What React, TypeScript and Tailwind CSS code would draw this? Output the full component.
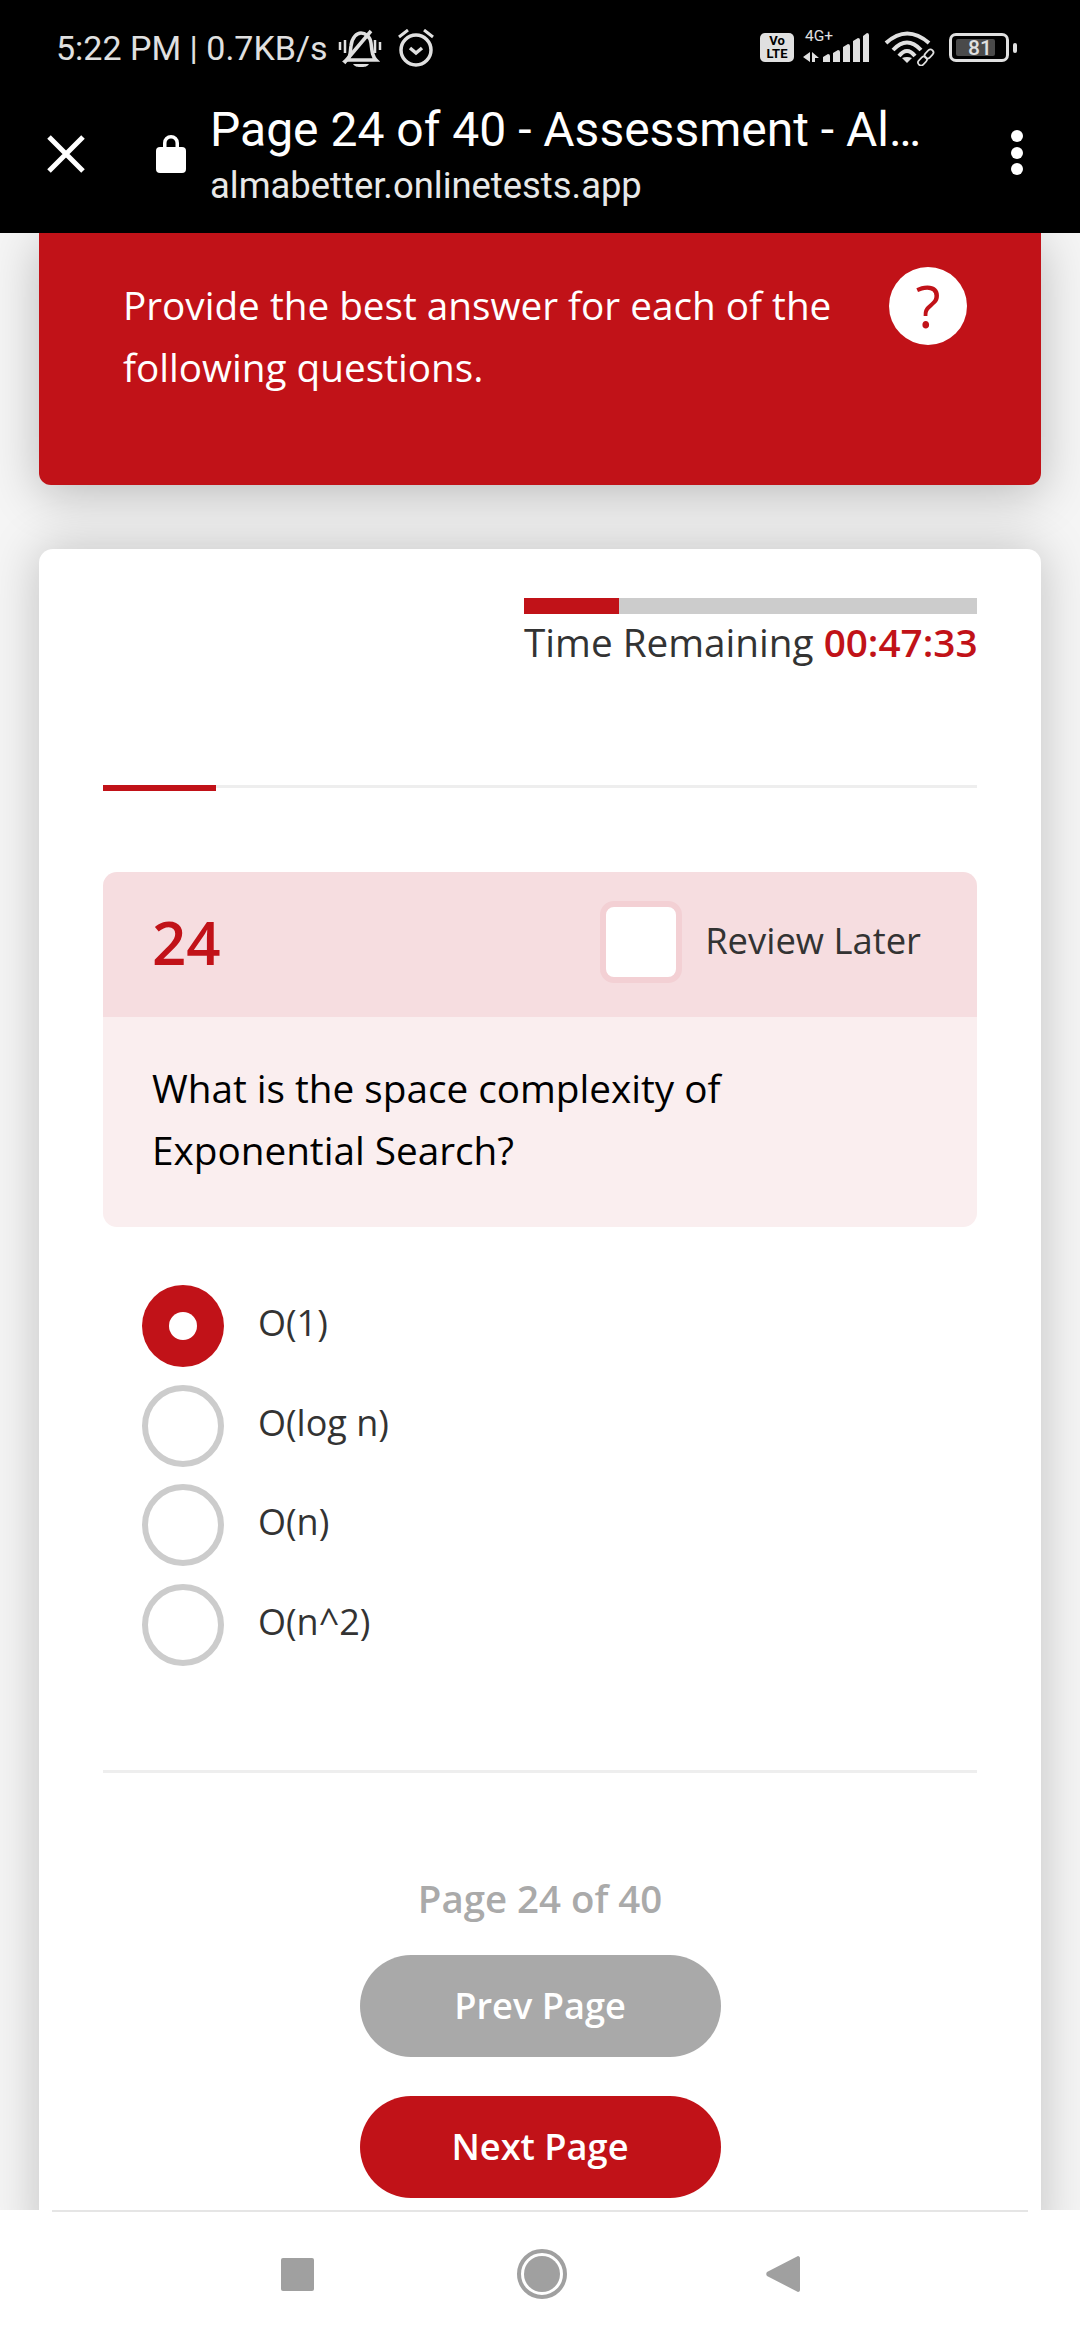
import React from 'react';

const options = ['O(1)', 'O(log n)', 'O(n)', 'O(n^2)'];

const MutedBell = () => (
  <svg width="46" height="40" viewBox="0 0 46 40" fill="none" stroke="#e0e0e0" strokeWidth="3.5">
    <path d="M10 32c4-3 3-8 4-14 1-9 6-13 10-13s9 3 10 10c1 8 1 13 5 17z" />
    <path d="M34 3 7 35" />
    <path d="M16 36h16c-2 3-5 3-8 3s-6 0-8-3z" fill="#e0e0e0" stroke="none" />
    <path d="M3 14v8M8 12v13M38 12v13M43 14v8" strokeWidth="2.500" />
  </svg>
);

const Alarm = () => (
  <svg width="42" height="38" viewBox="0 0 42 38" fill="none" stroke="#e0e0e0" strokeWidth="3.500">
    <circle cx="21" cy="21" r="15" />
    <path d="M15 19l6 5 6-5" />
    <path d="M4 8 13 1M38 8 29 1" strokeWidth="3" />
  </svg>
);

const Signal = () => (
  <svg width="67" height="32" viewBox="0 0 67 32" fill="#e0e0e0">
    <path d="M7 20v10L0 25zM9 20l7 6H12v4H9z" />
    <path d="M20 30v-5l5-3q2 0 2 2v6zM30 30V21l5-3q2 0 2 2v10zM40 30V15l5-3q2 0 2 2v16zM50 30V9l5-3q2 0 2 2v22zM60 30V4l4-3q2 0 2 2v27z" />
  </svg>
);

const Wifi = () => (
  <svg width="52" height="36" viewBox="0 0 52 36" fill="none" stroke="#e0e0e0" strokeWidth="4">
    <path d="M2 13Q23-6 45 13M9 20Q23 5 37 20M15 26Q23 16 31 26" />
    <path d="M18 28q5-2 10 0l-5 5z" fill="#e0e0e0" stroke="none" />
    <rect x="33.500" y="28" width="10" height="6" rx="3" transform="rotate(-45 38.500 31)" stroke="#000" strokeWidth="4" fill="#000" />
    <rect x="40" y="21" width="10" height="6" rx="3" transform="rotate(-45 45 24)" stroke="#000" strokeWidth="4" fill="#000" />
    <rect x="33.500" y="28" width="10" height="6" rx="3" transform="rotate(-45 38.500 31)" strokeWidth="1.700" />
    <rect x="40" y="21" width="10" height="6" rx="3" transform="rotate(-45 45 24)" strokeWidth="1.700" />
  </svg>
);

const App: React.FC = () => {
  return (
    <div className="w-[1080px] h-[2340px] flex flex-col overflow-hidden bg-[#f5f5f5] font-['Open_Sans',sans-serif]">
      {/* Status bar + browser header */}
      <div className="relative z-20 h-[233px] shrink-0 bg-black text-white font-['Roboto',sans-serif]">
        <div className="h-[95px] pl-[56px] pr-[63px] flex items-center justify-between">
          <div className="flex items-center">
            <span className="text-[34px] text-[#e0e0e0] leading-none">5:22 PM | 0.7KB/s</span>
            <span className="ml-[9px]"><MutedBell /></span>
            <span className="ml-[12px]"><Alarm /></span>
          </div>
          <div className="flex items-center">
            <div className="w-[34px] h-[29px] rounded-[5px] bg-[#e0e0e0] text-black text-[13px] leading-[12.500px] font-bold text-center pt-[2px]">
              <div>Vo</div>
              <div>LTE</div>
            </div>
            <div className="relative ml-[9px] w-[67px] h-[32px]">
              <span className="absolute -top-[3px] left-[2px] text-[15.500px] leading-none text-[#e0e0e0]">4G+</span>
              <Signal />
            </div>
            <span className="ml-[14px]"><Wifi /></span>
            <div className="ml-[13px] w-[60px] h-[29px] rounded-[7px] border-[3px] border-[#e0e0e0] px-[4px] py-[3px]">
              <div className="relative w-[39px] h-full bg-[#4a4a4a] rounded-[2px]">
                <span className="absolute left-[12px] -top-[2px] text-[21px] leading-[22px] font-medium text-[#e0e0e0]">81</span>
              </div>
            </div>
            <div className="ml-[4px] w-[4px] h-[10px] rounded-[2px] bg-[#e0e0e0]" />
          </div>
        </div>
        <div className="flex items-start pl-[46px] pr-[57px]">
          <svg width="40" height="40" viewBox="0 0 40 40" className="mt-[39px] shrink-0" stroke="#fff" strokeWidth="5">
            <path d="M3 3l34 34M37 3 3 37" />
          </svg>
          <svg width="30" height="40" viewBox="0 0 30 40" className="ml-[70px] mt-[38px] shrink-0" fill="#fff">
            <path d="M7 16v-6a8 8 0 0 1 16 0v6h-3.500v-6a4.500 4.500 0 0 0-9 0v6z" />
            <rect x="0" y="14" width="30" height="26" rx="4" />
          </svg>
          <div className="ml-[24px] w-[712px] shrink-0 pt-[8px]">
            <div className="text-[48px] leading-[54px] whitespace-nowrap">Page 24 of 40 - Assessment - Al…</div>
            <div className="text-[36.400px] leading-[42px] mt-[8px] text-[#e8e8e8] whitespace-nowrap">almabetter.onlinetests.app</div>
          </div>
          <div className="ml-auto mt-[35px] flex flex-col gap-[4.500px]">
            <div className="w-[12px] h-[12px] rounded-full bg-white" />
            <div className="w-[12px] h-[12px] rounded-full bg-white" />
            <div className="w-[12px] h-[12px] rounded-full bg-white" />
          </div>
        </div>
      </div>

      {/* Page content */}
      <div className="flex-1 overflow-hidden px-[39px]">
        {/* Instructions */}
        <div className="relative z-10 h-[252px] bg-[#c11218] rounded-b-[12px] shadow-[0_10px_50px_rgba(0,0,0,0.24)] pl-[84px] pr-[74px] pt-[41px] flex justify-between items-start">
          <p className="text-[38.700px] leading-[62px] text-white w-[725px]">
            Provide the best answer for each of the following questions.
          </p>
          <div className="w-[78px] h-[78px] mt-[-7px] rounded-full bg-white text-[#c11218] text-[58px] leading-[78px] text-center">?</div>
        </div>

        {/* Question card */}
        <div className="mt-[64px] bg-white rounded-t-[14px] shadow-[0_0_50px_rgba(0,0,0,0.22)] px-[64px] pt-[49px] h-[1700px]">
          <div className="w-[453px] ml-auto">
            <div className="h-[16px] bg-[#cccccc]">
              <div className="h-full w-[95px] bg-[#c11218]" />
            </div>
            <div className="mt-[3px] text-[38.700px] leading-[50px] text-[#333333] whitespace-nowrap">
              Time Remaining <span className="font-semibold text-[#c11218]">00:47:33</span>
            </div>
          </div>

          <div className="mt-[118px] h-[3px] bg-[#eeeeee]">
            <div className="h-[6px] w-[113px] bg-[#c11218]" />
          </div>

          <div className="mt-[84px] rounded-[14px] overflow-hidden">
            <div className="h-[145px] bg-[#f6dde0] pl-[49px] pr-[56px] flex items-center justify-between">
              <span className="mb-[5px] text-[60px] leading-none font-semibold text-[#c11218]">24</span>
              <div className="mb-[5px] flex items-center gap-[23px]">
                <div className="w-[82px] h-[82px] rounded-[14px] border-[6px] border-[#f3d0d4] bg-white" />
                <span className="mb-[3px] text-[36.400px] leading-none text-[#333333]">Review Later</span>
              </div>
            </div>
            <div className="h-[210px] bg-[#faeeef] pl-[49px] pt-[40px]">
              <p className="text-[38.700px] leading-[62px] text-black w-[640px]">
                What is the space complexity of Exponential Search?
              </p>
            </div>
          </div>

          <div className="mt-[58px] pl-[39px] flex flex-col gap-[17.500px]">
            {options.map((option, index) => (
              <div key={option} className="flex items-center h-[82px]">
                {index === 0 ? (
                  <div className="w-[82px] h-[82px] rounded-full bg-[#c11218] flex items-center justify-center">
                    <div className="w-[28px] h-[28px] rounded-full bg-white" />
                  </div>
                ) : (
                  <div className="w-[82px] h-[82px] rounded-full border-[6px] border-[#cccccc] bg-white" />
                )}
                <span className="ml-[34px] mb-[6px] text-[36px] leading-none text-[#333333]">{option}</span>
              </div>
            ))}
          </div>

          <div className="mt-[104px] h-[3px] bg-[#eeeeee]" />

          <div className="mt-[100px] flex flex-col items-center">
            <div className="text-[38.400px] leading-[50px] font-semibold text-[#aaaaaa]">Page 24 of 40</div>
            <button className="mt-[32px] w-[361px] h-[102px] rounded-full bg-[#a9a9a9] text-white text-[36.200px] font-semibold">Prev Page</button>
            <button className="mt-[39px] w-[361px] h-[102px] rounded-full bg-[#c11218] text-white text-[36.200px] font-semibold">Next Page</button>
          </div>
        </div>
      </div>

      {/* Android nav bar */}
      <div className="relative z-20 h-[130px] shrink-0 bg-white">
        <div className="mx-[52px] h-[2px] bg-[#e5e5e5]" />
        <div className="flex items-center justify-center h-[128px] pb-[4px]">
          <div className="w-[33px] h-[33px] rounded-[2px] bg-[#a0a0a0]" />
          <div className="ml-[203px] w-[50px] h-[50px] rounded-full border-[4px] border-[#a0a0a0] p-[3px]">
            <div className="w-full h-full rounded-full bg-[#a0a0a0]" />
          </div>
          <svg width="34" height="36" viewBox="0 0 34 36" className="ml-[199px]" fill="#a0a0a0">
            <path d="M32 0c1 0 2 1 2 2v32c0 1-1 2-2 2L1 20c-1-1-1-3 0-4z" />
          </svg>
        </div>
      </div>
    </div>
  );
};

export default App;
